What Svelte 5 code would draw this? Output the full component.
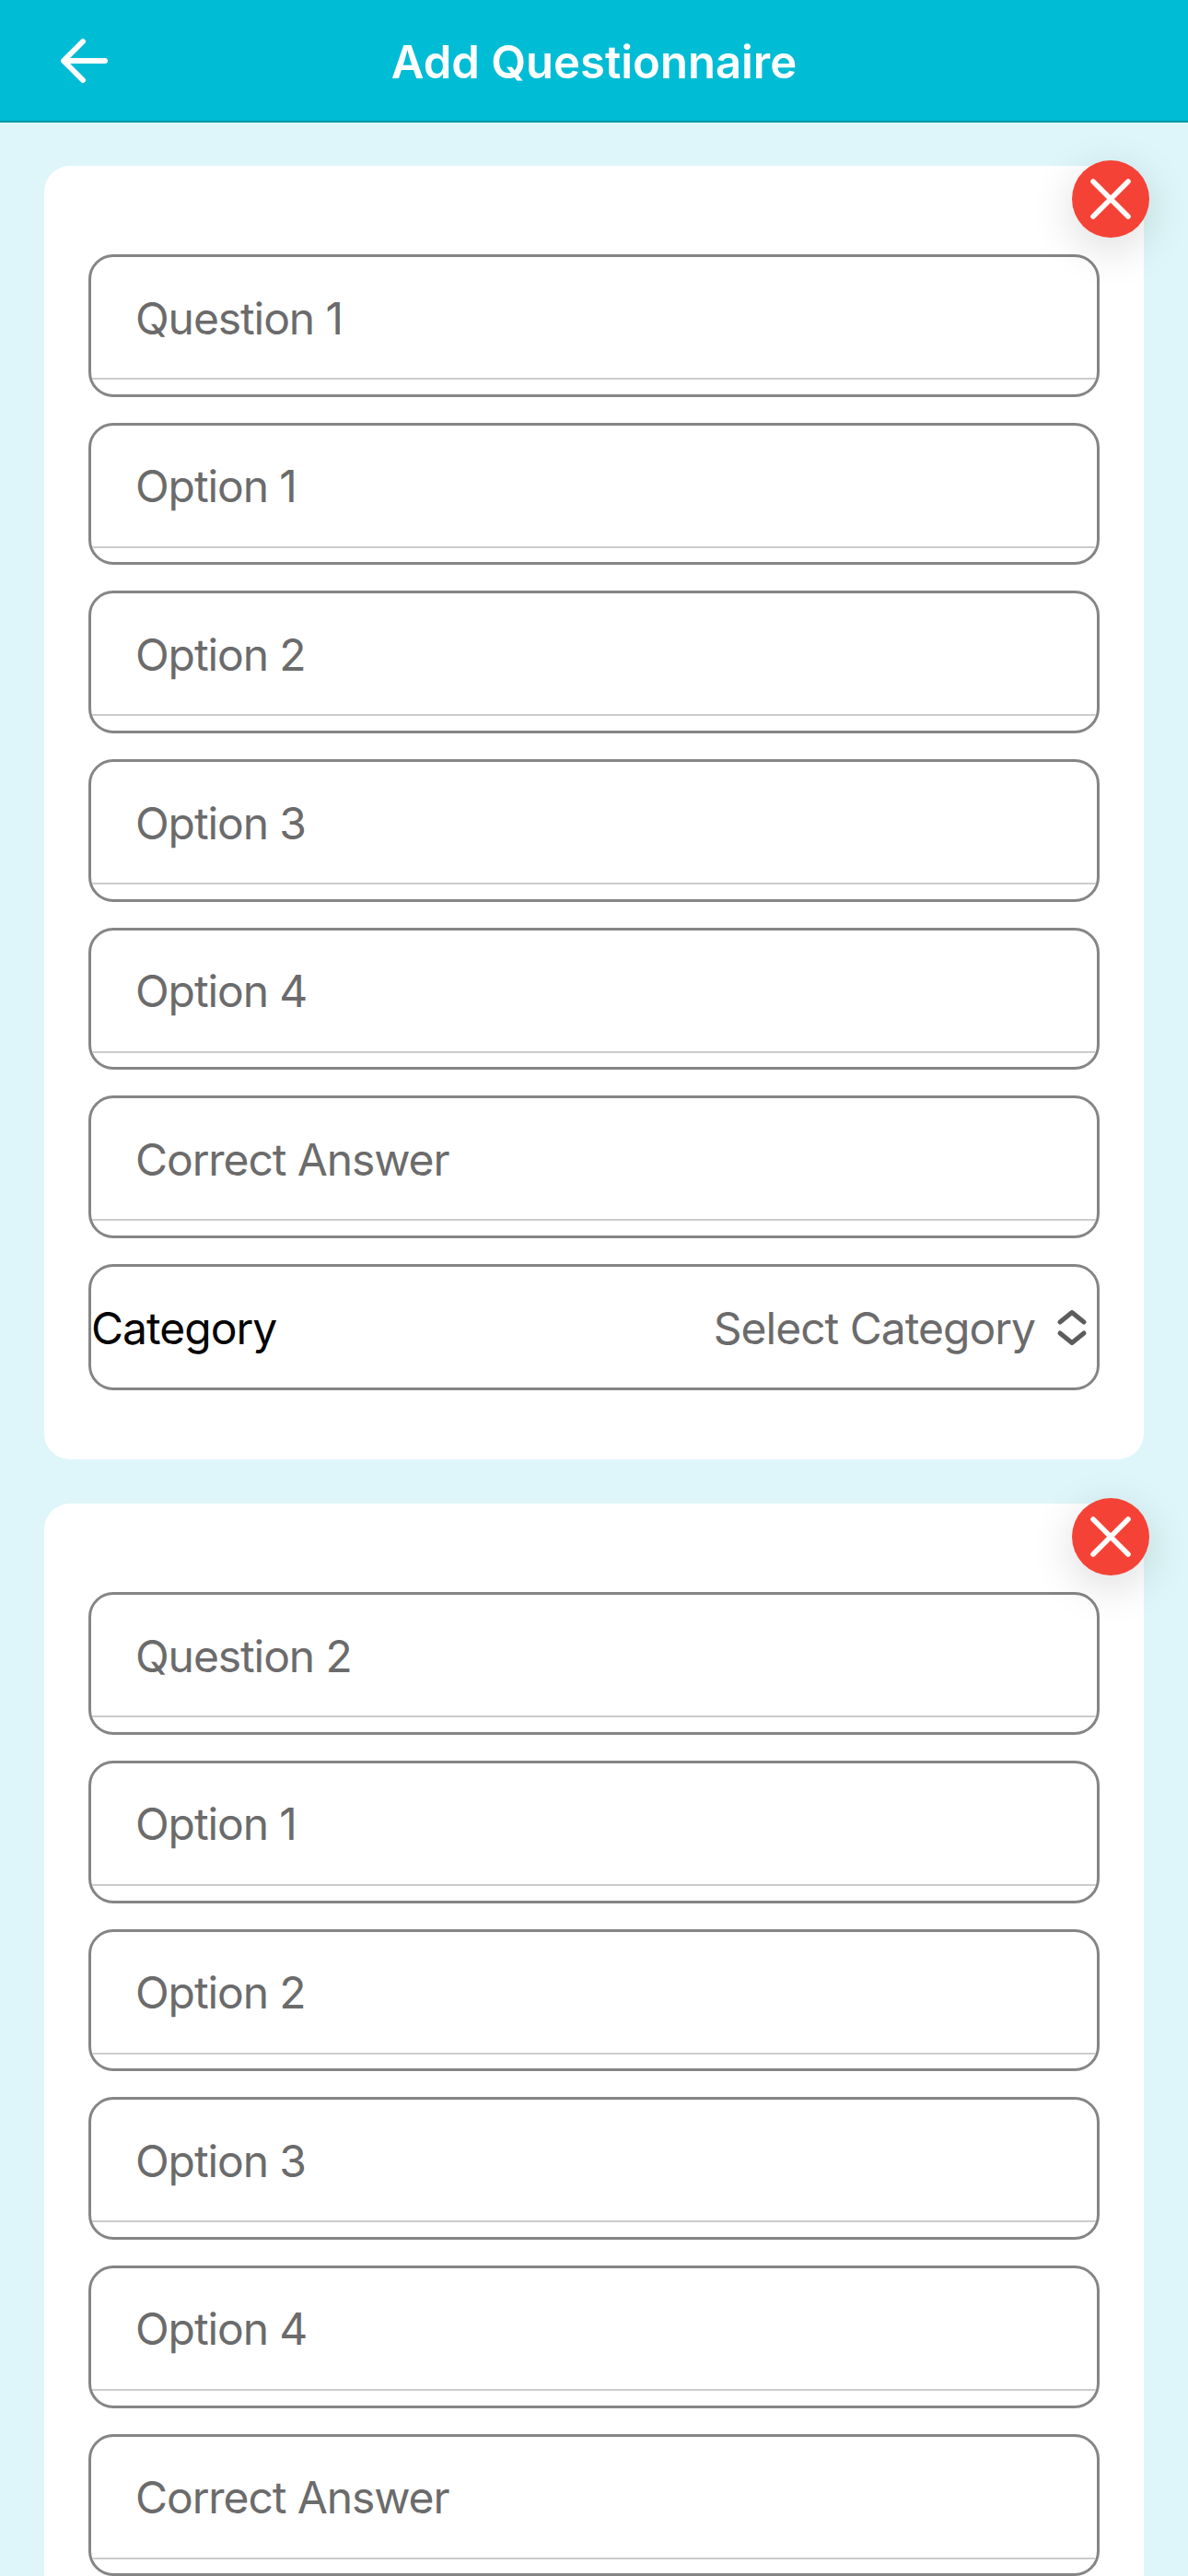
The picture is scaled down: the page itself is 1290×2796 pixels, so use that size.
<script>
    const fields = ["Option 1", "Option 2", "Option 3", "Option 4", "Correct Answer"];
    const cards = [
        { title: "Question 1", category: true },
        { title: "Question 2", category: false }
    ];
</script>

<div class="page">
    <header class="toolbar">
        <button class="back" aria-label="Back">
            <svg width="60" height="60" viewBox="0 0 60 60" fill="none" stroke="#fff" stroke-width="6" stroke-linecap="round" stroke-linejoin="round">
                <path d="M7 30 L28 9 M7 30 L28 51 M8 30 H52" />
            </svg>
        </button>
        <h1>Add Questionnaire</h1>
    </header>

    <main class="content">
        {#each cards as card}
            <section class="card">
                <button class="remove" aria-label="Remove">
                    <svg width="46" height="46" viewBox="0 0 46 46" fill="none" stroke="#fff" stroke-width="5.5" stroke-linecap="round">
                        <path d="M4 4 L42 42 M42 4 L4 42" />
                    </svg>
                </button>
                <div class="field"><div class="line">{card.title}</div></div>
                {#each fields as label}
                    <div class="field"><div class="line">{label}</div></div>
                {/each}
                {#if card.category}
                    <div class="field select">
                        <span class="select-label">Category</span>
                        <span class="select-value">Select Category</span>
                        <svg width="34" height="40" viewBox="0 0 34 40" fill="none" stroke="#5c5c5c" stroke-width="5" stroke-linecap="round" stroke-linejoin="round">
                            <path d="M4 14 L17 3.5 L30 14 M4 26 L17 36.5 L30 26" />
                        </svg>
                    </div>
                {/if}
            </section>
        {/each}
    </main>
</div>

<style>
    :global(body) {
        margin: 0;
    }

    .page {
        width: 1290px;
        height: 2796px;
        overflow: hidden;
        background: #def6f9;
        font-family: Inter, "Liberation Sans", sans-serif;
    }

    .toolbar {
        box-sizing: border-box;
        height: 133px;
        padding-top: 3px;
        background: #00bcd4;
        border-bottom: 2px solid #0097a7;
        display: flex;
        align-items: center;
        justify-content: center;
        position: relative;
    }

    .toolbar h1 {
        margin: 0;
        color: #fff;
        font-size: 49px;
        font-weight: 600;
    }

    .back {
        position: absolute;
        left: 62px;
        top: 36px;
        padding: 0;
        border: none;
        background: none;
        line-height: 0;
    }

    .content {
        padding: 47px 48px 0;
        display: flex;
        flex-direction: column;
        gap: 48px;
    }

    .card {
        position: relative;
        box-sizing: border-box;
        background: #fff;
        border-radius: 28px;
        padding: 96px 48px 75px;
        display: flex;
        flex-direction: column;
        gap: 28px;
    }

    .remove {
        position: absolute;
        top: -6px;
        right: -6px;
        width: 84px;
        height: 84px;
        border: none;
        border-radius: 50%;
        padding: 0;
        background: #f44336;
        box-shadow: 0 12px 48px rgba(0, 0, 0, 0.14);
        display: flex;
        align-items: center;
        justify-content: center;
    }

    .field {
        box-sizing: border-box;
        height: 154.7px;
        flex: none;
        border: 3px solid #858585;
        border-radius: 27px;
        overflow: hidden;
    }

    .line {
        box-sizing: border-box;
        height: 133px;
        border-bottom: 2px solid #cccccc;
        padding: 1px 0 0 48px;
        display: flex;
        align-items: center;
        font-size: 48px;
        letter-spacing: -1.1px;
        color: #6b6b6b;
    }

    .select {
        height: 137px;
        display: flex;
        align-items: center;
        font-size: 48px;
        letter-spacing: -1px;
        padding-right: 10px;
    }

    .select-label {
        color: #000;
        padding-top: 1px;
    }

    .select-value {
        margin-left: auto;
        margin-right: 23px;
        padding-top: 1px;
        color: #6b6b6b;
    }
</style>
